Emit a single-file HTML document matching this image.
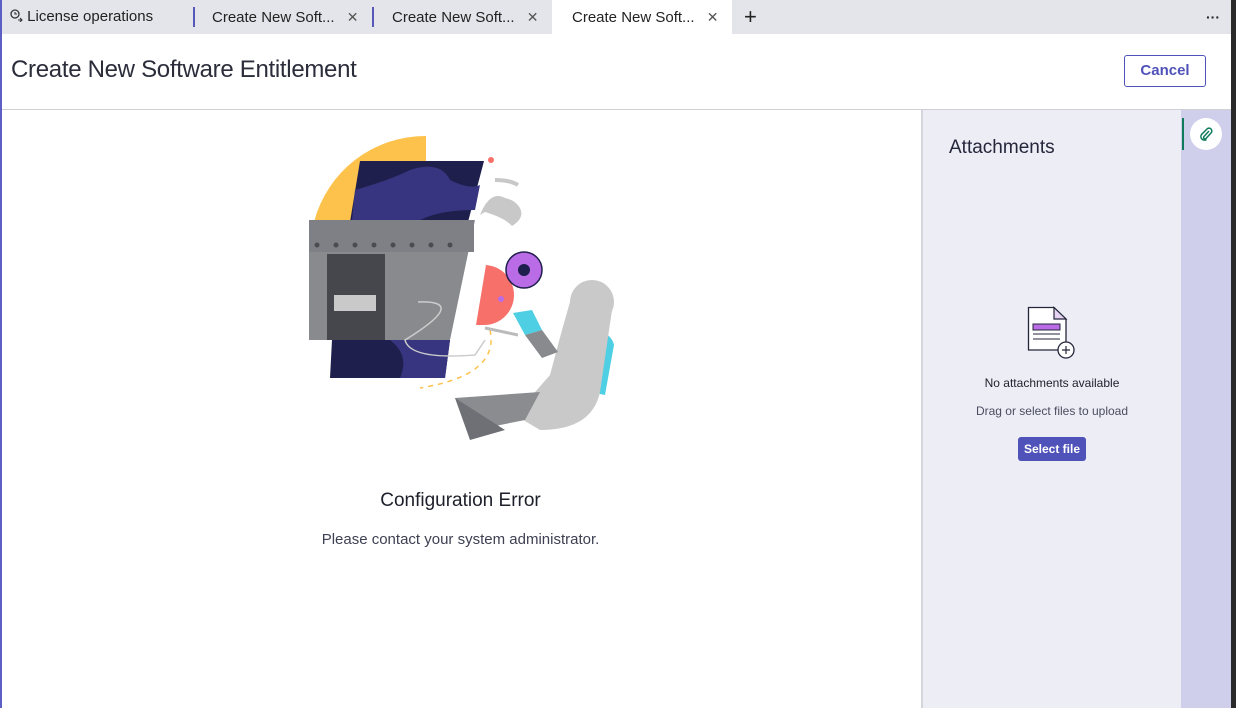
<!DOCTYPE html>
<html><head><meta charset="utf-8"><style>
*{box-sizing:border-box;margin:0;padding:0}
body{width:1236px;height:708px;overflow:hidden;font-family:"Liberation Sans",sans-serif;background:#fff;position:relative;color:#24263a}
.tabs{position:absolute;left:0;top:0;width:1231px;height:34px;background:#e4e5ea}
.tab{position:absolute;top:0;height:34px;font-size:15px;line-height:34px;color:#222;white-space:nowrap}
.sep{position:absolute;top:7px;width:2px;height:20px;background:#5659b8}
.x{font-size:14px;color:#555;margin-left:8px}
.hdr{position:absolute;left:0;top:34px;width:1231px;height:76px;background:#fff;border-bottom:1px solid #cfcfd4}
.hdr h1{position:absolute;left:11px;top:22px;font-size:24px;font-weight:normal;color:#2b2d3b;letter-spacing:-0.3px}
.cancel{position:absolute;left:1124px;top:21px;width:82px;height:32px;border:1px solid #4f52b8;border-radius:3px;color:#4f52b8;font-size:15px;font-weight:bold;text-align:center;line-height:30px}
.lb{position:absolute;left:0;top:0;width:2px;height:708px;background:#5c5fc4}
.div{position:absolute;left:921px;top:110px;width:2px;height:598px;background:#d5d5dc}
.att{position:absolute;left:923px;top:110px;width:258px;height:598px;background:#ededf6}
.rail{position:absolute;left:1181px;top:110px;width:50px;height:598px;background:#cfcfeb}
.rb{position:absolute;left:1231px;top:0;width:5px;height:708px;background:#2a2a2a}
.att h2{position:absolute;left:26px;top:27px;font-size:19px;font-weight:normal;color:#24263a}
.c{position:absolute;text-align:center;width:100%}
</style></head><body>
<div class="tabs">
 <div class="tab" style="left:10px"><svg width="13" height="13" viewBox="0 0 13 13" style="vertical-align:-1px"><circle cx="5" cy="5" r="4" fill="none" stroke="#333" stroke-width="1.3"/><path d="M5 3v2h2M8 11h4M10 9l2 2-2 2" fill="none" stroke="#333" stroke-width="1.1"/></svg> License operations</div>
 <div class="sep" style="left:193px"></div>
 <div class="tab" style="left:212px">Create New Soft... <span class="x">✕</span></div>
 <div class="sep" style="left:372px"></div>
 <div class="tab" style="left:392px">Create New Soft... <span class="x">✕</span></div>
 <div class="tab" style="left:552px;width:180px;background:#fff;padding-left:20px">Create New Soft... <span class="x">✕</span></div>
 <div class="tab" style="left:744px;font-size:22px;font-weight:300">+</div>
 <div class="tab" style="left:1206px;font-size:14px;font-weight:bold">···</div>
</div>
<div class="hdr"><h1>Create New Software Entitlement</h1><div class="cancel">Cancel</div></div>
<div class="lb"></div>
<svg style="position:absolute;left:300px;top:130px" width="330" height="320" viewBox="0 0 330 320">
 <path d="M126 6 A115 115 0 0 0 14 92 L126 92Z" fill="#fdc24b"/>
 <polygon points="60,31 184,31 168,92 50,92" fill="#1f1f4d"/>
 <path d="M55 60 Q90 50 110 40 Q140 30 150 50 Q170 60 180 55 L175 80 Q140 80 120 90 L52 90Z" fill="#37357f"/>
 <polygon points="9,90 175,90 150,210 9,210" fill="#888a8e"/>
 <rect x="9" y="90" width="165" height="32" fill="#7e8085"/>
 <g fill="#4a4c52"><circle cx="17" cy="115" r="2.5"/><circle cx="36" cy="115" r="2.5"/><circle cx="55" cy="115" r="2.5"/><circle cx="74" cy="115" r="2.5"/><circle cx="93" cy="115" r="2.5"/><circle cx="112" cy="115" r="2.5"/><circle cx="131" cy="115" r="2.5"/><circle cx="150" cy="115" r="2.5"/></g>
 <rect x="27" y="124" width="58" height="86" fill="#45474c"/>
 <rect x="34" y="165" width="42" height="16" fill="#c9c9c9"/>
 <polygon points="32,210 150,210 145,248 30,248" fill="#1f1f4d"/>
 <path d="M90 210 Q110 225 100 248 L145 248 L150 210Z" fill="#37357f"/>
 <path d="M184 135 A30 30 0 0 1 184 195 L176 195 L186 135Z" fill="#f7706a"/>
 <circle cx="224" cy="140" r="18" fill="#b96ce6" stroke="#1f1f4d" stroke-width="1.5"/>
 <circle cx="224" cy="140" r="6" fill="#1f1f4d"/>
 <circle cx="191" cy="30" r="3" fill="#f7706a"/>
 <circle cx="201" cy="169" r="3" fill="#b96ce6"/>
 <path d="M180 85 Q190 60 205 68 Q215 70 220 78 Q225 88 212 96 Q205 88 185 82Z" fill="#c8c8c8"/>
 <path d="M195 50 Q210 50 218 55" stroke="#c8c8c8" stroke-width="4" fill="none"/>
 <path d="M118 172 Q170 170 105 210 Q110 230 175 225 L185 210" stroke="#ccc" stroke-width="1.5" fill="none"/>
 <path d="M190 200 Q200 245 120 258" stroke="#fdc24b" stroke-width="1.5" fill="none" stroke-dasharray="5 5"/>
 <path d="M298 200 Q312 205 314 215 L305 265 L290 262Z" fill="#4fcfe3"/>
 <circle cx="292" cy="172" r="22" fill="#c9c9c9"/>
 <path d="M272 165 L312 180 L300 262 Q292 300 240 300 L215 285 L250 245 L262 200Z" fill="#c9c9c9"/>
 <path d="M155 268 L240 262 L225 290 L175 300 Z" fill="#8a8c90"/>
 <path d="M155 268 L170 310 L205 300 Z" fill="#6e7075"/>
 <path d="M213 183 L232 180 L242 200 L225 205Z" fill="#4fcfe3"/>
 <path d="M225 205 L242 200 L258 222 L242 228Z" fill="#888a8e"/>
 <line x1="185" y1="198" x2="218" y2="205" stroke="#bbb" stroke-width="3"/>
</svg>
<div style="position:absolute;left:0;top:490px;width:921px;text-align:center;font-size:19px;color:#1d1f2a">Configuration Error</div>
<div style="position:absolute;left:0;top:531px;width:921px;text-align:center;font-size:15px;color:#3e4152">Please contact your system administrator.</div>
<div class="div"></div>
<div class="att">
 <h2>Attachments</h2>
 <svg style="position:absolute;left:104px;top:196px" width="50" height="54" viewBox="0 0 50 54">
  <path d="M1.5 1.5 H27 L39 13 V44 H1.5Z" fill="#fff" stroke="#24263a" stroke-width="1.3"/>
  <path d="M27 1.5 V13 H39Z" fill="#e6d3f1" stroke="#24263a" stroke-width="1.2"/>
  <rect x="6" y="18" width="27" height="6" fill="#b96ce6" stroke="#24263a" stroke-width="1"/>
  <line x1="6" y1="28" x2="33" y2="28" stroke="#24263a"/><line x1="6" y1="33" x2="33" y2="33" stroke="#24263a"/>
  <circle cx="39" cy="44" r="8" fill="#fff" stroke="#24263a" stroke-width="1.3"/>
  <path d="M35 44h8M39 40v8" stroke="#24263a" stroke-width="1.2"/>
 </svg>
 <div class="c" style="top:266px;font-size:12px;color:#1d1f2a">No attachments available</div>
 <div class="c" style="top:294px;font-size:12px;color:#4a4d5e">Drag or select files to upload</div>
 <div style="position:absolute;left:95px;top:327px;width:68px;height:24px;background:#4f52b8;border-radius:3px;color:#fff;font-size:12px;font-weight:bold;text-align:center;line-height:24px">Select file</div>
</div>
<div class="rail">
 <div style="position:absolute;left:1px;top:8px;width:2px;height:32px;background:#0f7b5a"></div>
 <div style="position:absolute;left:9px;top:8px;width:32px;height:32px;border-radius:50%;background:#fff;text-align:center">
  <svg width="14" height="14" viewBox="0 0 14 14" style="margin-top:9px"><path d="M10 4 L5 9.5 a1.3 1.3 0 0 0 2 2 L12 6 a2.6 2.6 0 0 0 -4 -4 L2.5 7.5 a3.6 3.6 0 0 0 5 5" fill="none" stroke="#0f7b5a" stroke-width="1.5"/></svg>
 </div>
</div>
<div class="rb"></div>
</body></html>
